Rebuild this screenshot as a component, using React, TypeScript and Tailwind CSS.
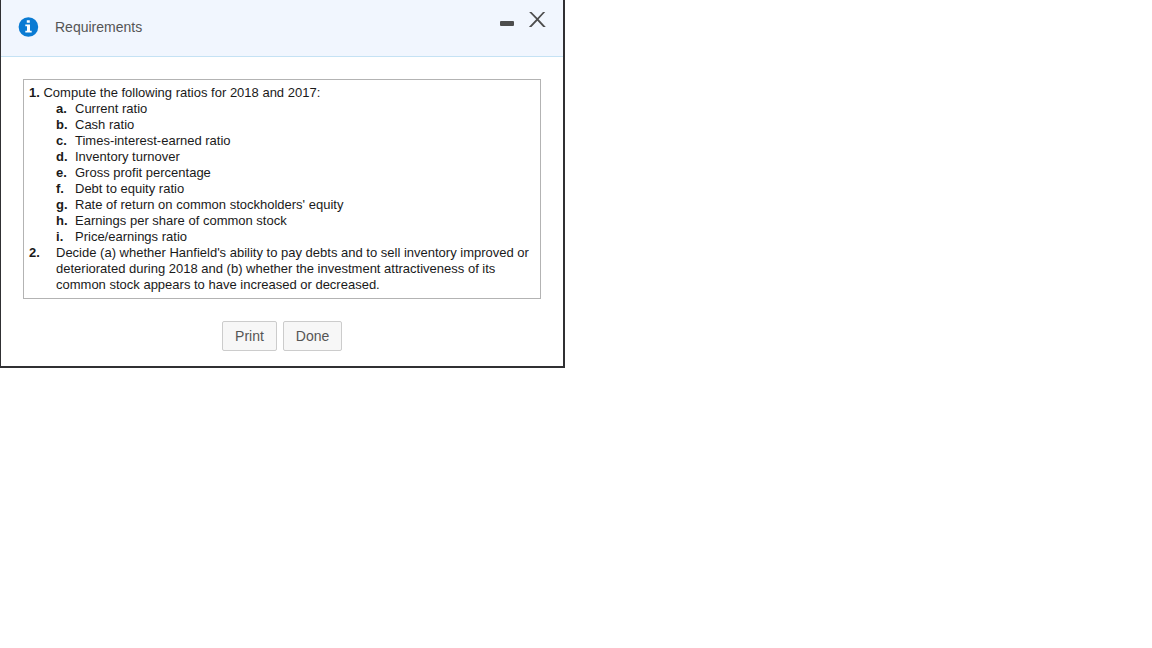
import type { ReactNode } from 'react';

const ratios = [
  'Current ratio',
  'Cash ratio',
  'Times-interest-earned ratio',
  'Inventory turnover',
  'Gross profit percentage',
  'Debt to equity ratio',
  "Rate of return on common stockholders' equity",
  'Earnings per share of common stock',
  'Price/earnings ratio',
];

function InfoIcon() {
  return (
    <svg width="21" height="20" viewBox="0 0 21 20" aria-hidden="true">
      <circle cx="10.4" cy="10" r="9.8" fill="#0a7bd3" />
      <path
        d="M8.8 3.3h3v2.4h-3zM7.3 7.5H12v6.2h1.7v1.9H7.3v-1.9H9V9.3H7.3z"
        fill="#fff"
      />
    </svg>
  );
}

function DialogButton({ children, className }: { children: ReactNode; className: string }) {
  return (
    <button
      type="button"
      className={`h-[30px] rounded-xs border border-[#cccccc] bg-[#f7f7f7] text-sm text-[#555555] ${className}`}
    >
      {children}
    </button>
  );
}

export default function App() {
  return (
    <div className="h-screen bg-white font-['Liberation_Sans',Arial,sans-serif]">
      <div className="flex h-[368px] w-[565px] flex-col border-r-2 border-b-2 border-l border-[#303033] bg-white">
        {/* Title bar */}
        <div className="flex h-[57px] shrink-0 border-b border-[#c5e2f4] bg-[#f1f6fe]">
          <div className="flex grow items-center gap-4 pb-0.5 pl-[17px]">
            <InfoIcon />
            <span className="text-sm text-[#555555]">Requirements</span>
          </div>
          <div className="flex items-start gap-[14px] pt-3 pr-[17px]">
            <button type="button" aria-label="Minimize" className="pt-[9px]">
              <svg width="14" height="5" viewBox="0 0 14 5">
                <rect width="14" height="5" rx="1" fill="#4d4d4d" />
              </svg>
            </button>
            <button type="button" aria-label="Close">
              <svg width="18" height="15" viewBox="-0.4 0 18 15">
                <path
                  d="M0.7 0h2.4L9 6l5.6-6h2.2L10.2 7.3 17.4 15h-2.6L9 8.7 3 15H0.5L7.8 7.3z"
                  fill="#4d4d4d"
                />
              </svg>
            </button>
          </div>
        </div>

        {/* Requirement list */}
        <div className="mt-[22px] ml-[22px] h-[220px] w-[518px] shrink-0 border border-[#b3b3b3] pt-[5px] pl-[5px] text-[13px] leading-4 text-[#1a1a1a]">
          <p>
            <b>1.</b> Compute the following ratios for 2018 and 2017:
          </p>
          <ol className="pl-[27px]">
            {ratios.map((ratio, i) => (
              <li key={ratio} className="flex">
                <b className="w-[19px]">{String.fromCharCode(97 + i)}.</b>
                <span>{ratio}</span>
              </li>
            ))}
          </ol>
          <div className="flex">
            <b className="w-[27px] shrink-0">2.</b>
            <p className="whitespace-nowrap">
              Decide (a) whether Hanfield's ability to pay debts and to sell inventory improved or
              <br />
              deteriorated during 2018 and (b) whether the investment attractiveness of its
              <br />
              common stock appears to have increased or decreased.
            </p>
          </div>
        </div>

        {/* Actions */}
        <div className="mt-[22px] ml-[221px] flex gap-1.5">
          <DialogButton className="w-[55px]">Print</DialogButton>
          <DialogButton className="w-[59px]">Done</DialogButton>
        </div>
      </div>
    </div>
  );
}
